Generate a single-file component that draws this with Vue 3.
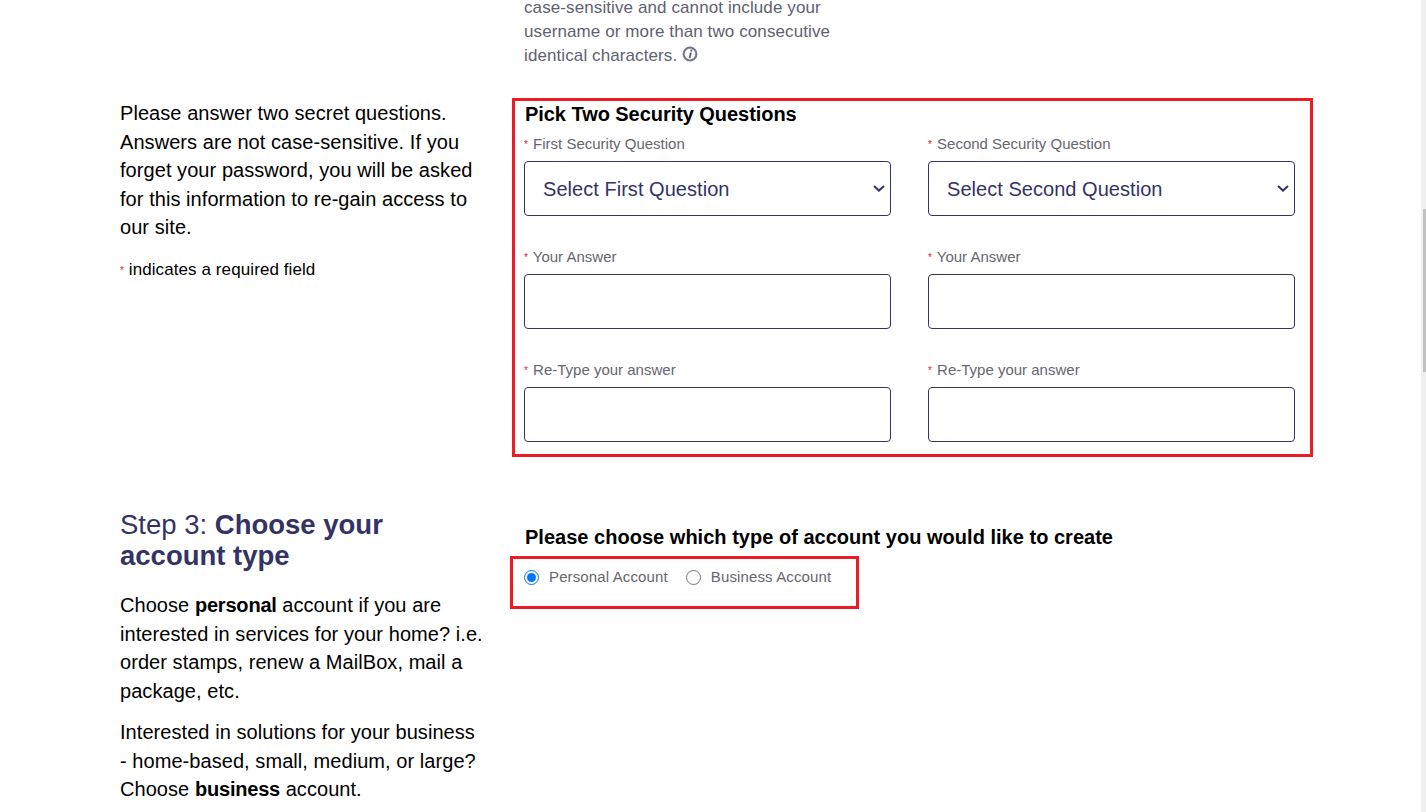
<template>
  <div class="page">
    <div class="content">
      <section class="row row--top">
        <div></div>
        <p class="hint">
          case-sensitive and cannot include your<br />
          username or more than two consecutive<br />
          identical characters.
          <svg class="info" viewBox="0 0 16 16" width="16" height="16">
            <circle cx="8" cy="8" r="6.4" fill="none" stroke="#73758a" stroke-width="2" />
            <path d="M8.6 3.6h1.9l-.4 1.8H8.2zM7.8 6.4h1.9l-1.1 5.9H6.7z" fill="#5f6070" />
          </svg>
        </p>
      </section>

      <section class="row">
        <div class="aside aside--first">
          <p>
            Please answer two secret questions. Answers are not case-sensitive. If you forget your
            password, you will be asked for this information to re-gain access to our site.
          </p>
          <p class="required-note"><span class="star">*</span> indicates a required field</p>
        </div>

        <div class="box box--questions">
          <h3>Pick Two Security Questions</h3>
          <div class="fields">
            <div v-for="field in fields" :key="field.id" class="field">
              <label><span class="star">*</span> {{ field.label }}</label>
              <div v-if="field.placeholder" class="select">
                <select class="control">
                  <option>{{ field.placeholder }}</option>
                </select>
                <svg class="chevron" viewBox="0 0 12 7" width="12" height="7">
                  <path d="M1 1l5 4.6L11 1" fill="none" stroke="#333366" stroke-width="2" />
                </svg>
              </div>
              <input v-else class="control" type="text" />
            </div>
          </div>
        </div>
      </section>

      <section class="row row--step">
        <div class="aside">
          <h2>Step 3: <strong>Choose your account type</strong></h2>
          <p>
            Choose <strong>personal</strong> account if you are interested in services for your
            home? i.e. order stamps, renew a MailBox, mail a package, etc.
          </p>
          <p>
            Interested in solutions for your business - home-based, small, medium, or large? Choose
            <strong>business</strong> account.
          </p>
        </div>

        <div class="account">
          <h3>Please choose which type of account you would like to create</h3>
          <div class="box box--radios">
            <label class="radio">
              <input type="radio" name="account" checked />
              Personal Account
            </label>
            <label class="radio">
              <input type="radio" name="account" />
              Business Account
            </label>
          </div>
        </div>
      </section>
    </div>

    <div class="scrollbar"><div class="scrollbar__thumb"></div></div>
  </div>
</template>

<script setup>
const fields = [
  { id: 1, label: "First Security Question", placeholder: "Select First Question" },
  { id: 2, label: "Second Security Question", placeholder: "Select Second Question" },
  { id: 3, label: "Your Answer" },
  { id: 4, label: "Your Answer" },
  { id: 5, label: "Re-Type your answer" },
  { id: 6, label: "Re-Type your answer" },
];
</script>

<style scoped>
.page {
  position: relative;
  height: 812px;
  overflow: hidden;
  background: #fff;
  color: #000;
  font-family: "Liberation Sans", Arial, sans-serif;
}

.content {
  width: 1193px;
  padding-left: 120px;
}

.row {
  display: grid;
  grid-template-columns: 392px 801px;
}

.row--top {
  margin-top: -4px;
  height: 102px;
}

.hint {
  margin: 0 0 0 12px;
  font-size: 17px;
  line-height: 24px;
  letter-spacing: 0.1px;
  color: #5f6070;
}

.info {
  vertical-align: -1px;
}

.aside {
  padding-right: 28px;
  font-size: 20px;
  line-height: 28.5px;
  letter-spacing: 0.06px;
}

.aside--first {
  padding-top: 1px;
}

.aside p {
  margin: 0 0 13px;
}

.aside p strong {
  letter-spacing: -0.2px;
}

.aside .required-note {
  margin-top: 16px;
  font-size: 17px;
  line-height: 24px;
  letter-spacing: 0.09px;
}

.star {
  color: #e4202c;
  font-size: 10px;
  vertical-align: 1px;
}

.box {
  box-sizing: border-box;
  border: 3px solid #ed1c24;
}

.box--questions {
  height: 359px;
  padding: 0 15px 0 9px;
}

h3 {
  margin: 0;
  padding-left: 1px;
  font-size: 20px;
  line-height: 26px;
  font-weight: 700;
  letter-spacing: -0.05px;
}

.fields {
  display: grid;
  grid-template-columns: 367px 367px;
  column-gap: 37px;
  row-gap: 24px;
}

.field label {
  display: block;
  height: 34px;
  padding-top: 5px;
  box-sizing: border-box;
  font-size: 15px;
  line-height: 24px;
  color: #66666f;
}

.field .star {
  margin-right: 1px;
}

.select {
  position: relative;
}

.control {
  display: block;
  box-sizing: border-box;
  width: 100%;
  height: 55px;
  padding: 0 0 0 18px;
  background: #fff;
  border: 1px solid #333366;
  border-radius: 4px;
  font-family: inherit;
  font-size: 20px;
  letter-spacing: 0.04px;
  color: #333366;
  appearance: none;
}

.chevron {
  position: absolute;
  top: 24px;
  right: 6px;
  pointer-events: none;
}

.row--step {
  margin-top: 52px;
}

h2 {
  margin: 0 0 20px;
  font-size: 27.5px;
  line-height: 31px;
  font-weight: 400;
  letter-spacing: 0;
  color: #333366;
}

.account {
  padding-top: 15px;
}

.account h3 {
  padding-left: 13px;
  margin-bottom: 6px;
  letter-spacing: 0.02px;
}

.box--radios {
  display: flex;
  align-items: flex-start;
  gap: 18px;
  width: 349px;
  height: 53px;
  padding: 6px 0 0 11px;
  margin-left: -2px;
}

.radio {
  display: flex;
  align-items: center;
  gap: 10px;
  font-size: 15px;
  line-height: 24px;
  letter-spacing: 0.13px;
  color: #66666f;
}

.radio input {
  width: 15px;
  height: 15px;
  margin: 0;
}

.scrollbar {
  position: absolute;
  top: 0;
  right: 0;
  bottom: 0;
  width: 5px;
  background: #f0f0f0;
}

.scrollbar__thumb {
  position: absolute;
  top: 209px;
  right: 0;
  width: 3px;
  height: 163px;
  background: #c1c1c1;
}
</style>
